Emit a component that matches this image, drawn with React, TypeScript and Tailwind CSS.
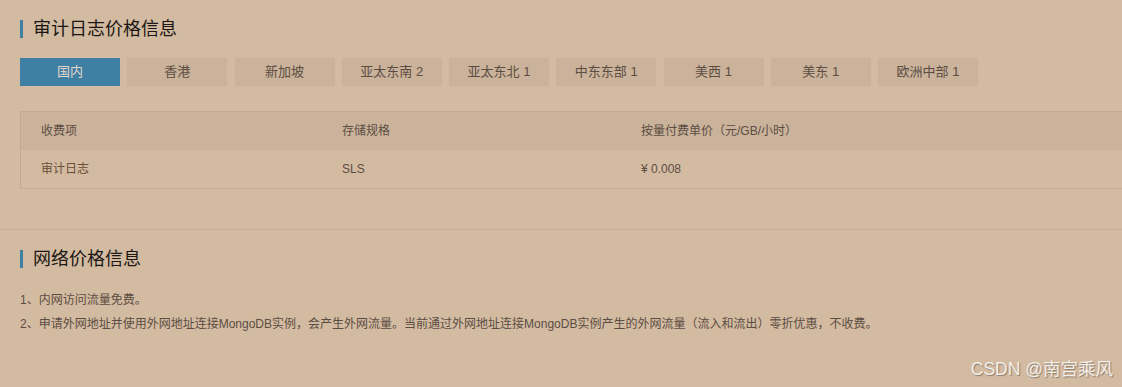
import React from "react";

const tabs = ["国内", "香港", "新加坡", "亚太东南 2", "亚太东北 1", "中东东部 1", "美西 1", "美东 1", "欧洲中部 1"];

export default function App() {
  return (
    <div
      className="relative w-[1122px] h-[387px] overflow-hidden bg-[#d3bba2]"
      style={{ fontFamily: '"Liberation Sans", "Noto Sans CJK SC", sans-serif' }}
    >
      <div className="pt-[20px] pl-[20px]">
        <div className="flex items-center h-[18px] border-l-[3px] border-[#3f7fa3] pl-[10px] text-[18px] leading-[18px] text-[#1c1713]">
          审计日志价格信息
        </div>
        <div className="mt-[20px] flex gap-[7.25px]">
          {tabs.map((t, i) => (
            <div
              key={t}
              className={
                i === 0
                  ? "w-[100px] h-[28px] flex items-center justify-center text-[13px] bg-[#3f7fa3] text-[#e2d6c8]"
                  : "w-[100px] h-[28px] flex items-center justify-center text-[13px] bg-[#cab29b] text-[#5c4d42]"
              }
            >
              {t}
            </div>
          ))}
        </div>
        <div className="mt-[25px] w-[1200px] border border-[#c2a990] text-[12px]">
          <div className="flex h-[38px] items-center bg-[#cab29b] text-[#5c4d42]">
            <div className="w-[301px] pl-[20px]">收费项</div>
            <div className="w-[299px] pl-[20px]">存储规格</div>
            <div className="pl-[20px]">按量付费单价（元/GB/小时）</div>
          </div>
          <div className="flex h-[38px] items-center text-[#5c4d42]">
            <div className="w-[301px] pl-[20px] text-[#6a4e38]">审计日志</div>
            <div className="w-[299px] pl-[20px]">SLS</div>
            <div className="pl-[20px]">¥ 0.008</div>
          </div>
        </div>
      </div>
      <div className="mt-[40px] h-px bg-[#c6ad95]" />
      <div className="pt-[20px] pl-[20px]">
        <div className="flex items-center h-[18px] border-l-[3px] border-[#3f7fa3] pl-[10px] text-[18px] leading-[18px] text-[#1c1713]">
          网络价格信息
        </div>
        <div className="mt-[20px] text-[12px] leading-[24px] text-[#5c4d42]">
          <div>1、内网访问流量免费。</div>
          <div>
            2、申请外网地址并使用外网地址连接MongoDB实例，会产生外网流量。当前通过外网地址连接MongoDB实例产生的外网流量（流入和流出）零折优惠，不收费。
          </div>
        </div>
      </div>
      <div
        className="absolute right-[9px] bottom-[8px] text-[17.5px] leading-[20px] text-[#f3efe9]"
        style={{ textShadow: "1px 1px 1px rgba(90,80,70,0.6)" }}
      >
        CSDN @南宫乘风
      </div>
    </div>
  );
}
